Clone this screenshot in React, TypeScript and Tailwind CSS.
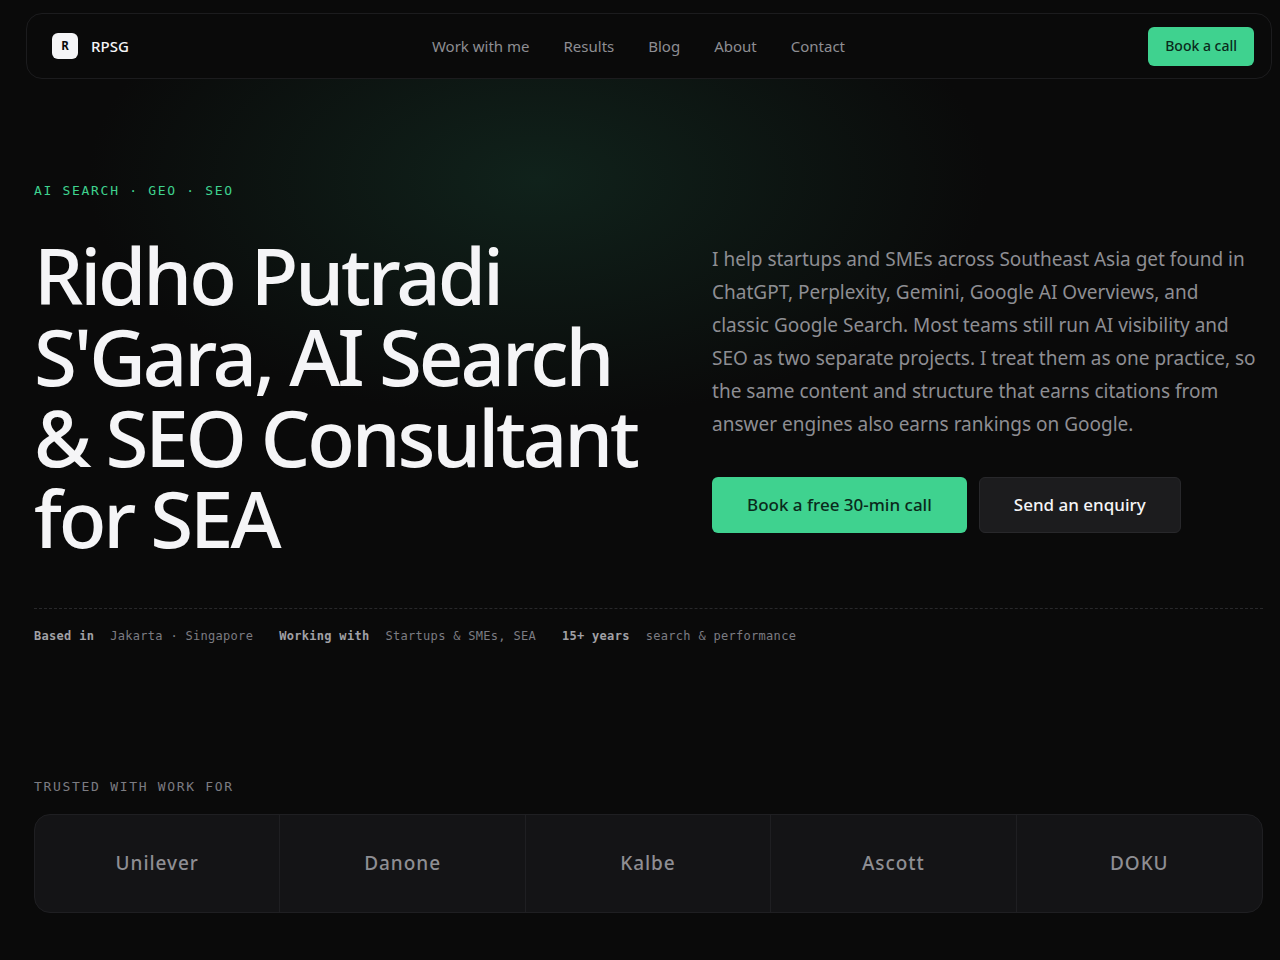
const links = ["Work with me", "Results", "Blog", "About", "Contact"];

const facts = [
  { label: "Based in", value: "Jakarta · Singapore" },
  { label: "Working with", value: "Startups & SMEs, SEA" },
  { label: "15+ years", value: "search & performance" },
];

const clients = ["Unilever", "Danone", "Kalbe", "Ascott", "DOKU"];

function Header() {
  return (
    <header className="bg-[#0a0a0a] pt-[13px] pl-[26px] pr-2">
      <div className="flex items-center justify-between h-[66px] pl-[25px] pr-[17px] rounded-2xl border border-[#1c1c1e]">
        <a href="#" className="flex items-center gap-[13px]">
          <span className="flex items-center justify-center size-[26px] rounded-md bg-[#f5f5f7] font-['DejaVu_Sans_Mono',monospace] text-xs font-bold text-[#0a0a0a]">
            R
          </span>
          <span className="text-[15px] font-medium text-[#f5f5f7]">RPSG</span>
        </a>
        <nav className="flex gap-[34px]">
          {links.map((link) => (
            <a key={link} href="#" className="text-[15px] text-[#8e8e93] hover:text-white">
              {link}
            </a>
          ))}
        </nav>
        <button className="h-[39px] px-[17px] pb-px rounded-md bg-[#3fd28f] text-sm font-medium text-[#0a2a1b]">
          Book a call
        </button>
      </div>
    </header>
  );
}

function Hero() {
  return (
    <section className="relative pt-[102px] pl-[34px] pr-[17px]">
      <div className="absolute left-0 right-0 top-0 h-[360px] bg-[radial-gradient(ellipse_450px_240px_at_42%_100px,#10221b,#0a0a0a)]" />
      <div className="relative">
        <p className="font-['DejaVu_Sans_Mono',monospace] text-[13px] leading-5 tracking-[0.13em] uppercase text-[#3fd28f]">
          AI Search · GEO · SEO
        </p>
        <div className="grid grid-cols-[1.1fr_1fr] gap-[72px] mt-[34px]">
          <h1 className="text-[78px] leading-[81px] font-medium tracking-[-0.04em] text-[#f5f5f7]">
            Ridho Putradi S'Gara, AI Search &amp; SEO Consultant for SEA
          </h1>
          <div className="pt-2">
            <p className="max-w-[546px] text-[19px] leading-[33px] text-[#8e8e93]">
              I help startups and SMEs across Southeast Asia get found in ChatGPT, Perplexity, Gemini,
              Google AI Overviews, and classic Google Search. Most teams still run AI visibility and SEO
              as two separate projects. I treat them as one practice, so the same content and structure
              that earns citations from answer engines also earns rankings on Google.
            </p>
            <div className="flex gap-3 mt-9">
              <button className="h-14 px-[35px] rounded-md bg-[#3fd28f] text-[17px] font-medium text-[#0a2a1b]">
                Book a free 30-min call
              </button>
              <button className="h-14 px-[34px] rounded-md border border-[#28282b] bg-[#1c1c1e] text-[17px] font-medium text-[#f5f5f7]">
                Send an enquiry
              </button>
            </div>
          </div>
        </div>
        <dl className="flex gap-[26px] mt-[49px] pt-[17px] border-t border-dashed border-[#28282b] font-['DejaVu_Sans_Mono',monospace] text-xs leading-5 tracking-wide text-[#7c7c82]">
          {facts.map((fact) => (
            <div key={fact.label} className="flex gap-4">
              <dt className="font-bold text-[#a1a1a6]">{fact.label}</dt>
              <dd>{fact.value}</dd>
            </div>
          ))}
        </dl>
      </div>
    </section>
  );
}

function Clients() {
  return (
    <section className="pt-[131px] pb-8 pl-[34px] pr-[17px]">
      <h2 className="font-['DejaVu_Sans_Mono',monospace] text-[13px] leading-5 tracking-[0.13em] uppercase text-[#7c7c82]">
        Trusted with work for
      </h2>
      <ul className="grid grid-cols-5 mt-[17px] rounded-2xl border border-[#1f1f22] bg-[#141416] divide-x divide-[#1f1f22]">
        {clients.map((client) => (
          <li
            key={client}
            className="flex items-center justify-center h-[97px] text-[19px] font-medium tracking-wider text-[#8e8e93]"
          >
            {client}
          </li>
        ))}
      </ul>
    </section>
  );
}

export default function App() {
  return (
    <div className="min-h-screen bg-[#0a0a0a] font-['Noto_Sans',sans-serif]">
      <Header />
      <main>
        <Hero />
        <Clients />
      </main>
    </div>
  );
}
